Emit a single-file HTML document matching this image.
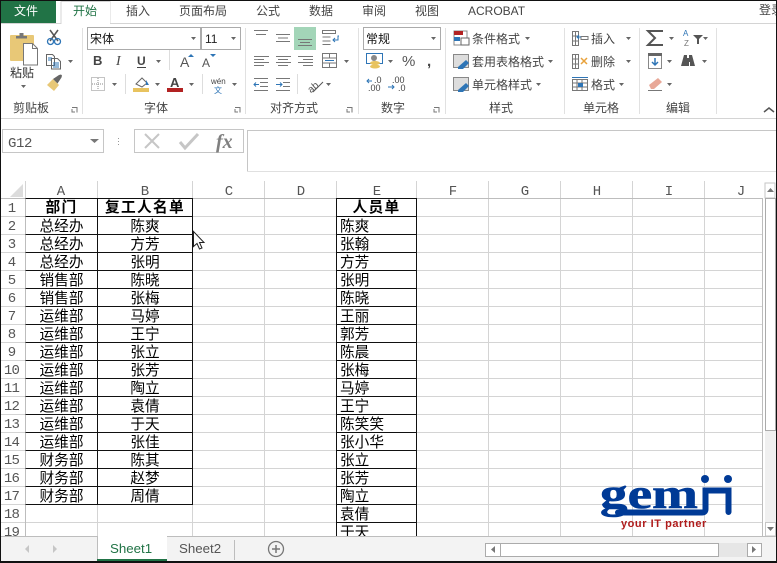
<!DOCTYPE html>
<html><head><meta charset="utf-8"><style>
html,body{margin:0;padding:0;background:#fff}
#p{position:relative;width:777px;height:563px;overflow:hidden;background:#fff;font-family:"Liberation Sans","Noto Sans CJK SC",sans-serif}
svg{position:absolute;left:0;top:0}
.c,.h,.r,.e{position:absolute;height:18px;line-height:18px;font-size:14.67px;color:#000;text-align:center;font-family:"Liberation Sans","Noto Sans CJK SC",sans-serif;white-space:nowrap;margin-top:1px}
.a{left:26px;width:71px}.b{left:98px;width:94px}.e{left:340px;width:76px;text-align:left}
.t{font-weight:bold;letter-spacing:1.33px;margin-top:0}
.r{left:1px;width:21px;font-family:"Liberation Mono",monospace;color:#555;font-size:14px;text-align:center;letter-spacing:-.8px}
.h{top:182px;font-family:"Liberation Mono",monospace;color:#555;font-size:14px;width:72px}
text{font-family:"Liberation Sans","Noto Sans CJK SC",sans-serif;font-size:12px;fill:#444}
</style></head><body><div id="p">
<svg width="777" height="563" viewBox="0 0 777 563">
<!-- frame -->
<rect x="0" y="1" width="56" height="23" fill="#217346"/>
<text x="14" y="15" fill="#fff" style="fill:#fff">文件</text>
<path d="M0 23.500H61V1.500H110V23.500H777" fill="none" stroke="#d4d4d4"/>
<rect x="62" y="2" width="48" height="22" fill="#fff"/>
<text x="73" y="15" style="fill:#217346">开始</text>
<text x="126" y="15">插入</text><text x="179" y="15">页面布局</text><text x="256" y="15">公式</text><text x="309" y="15">数据</text><text x="362" y="15">审阅</text><text x="415" y="15">视图</text><text x="468" y="15">ACROBAT</text><text x="759" y="14">登录</text>
<!-- ribbon lines -->
<path d="M82.500 28V114M245.500 28V114M358.500 28V114M445.500 28V114M564.500 28V114M639.500 28V114M716.500 28V114" stroke="#e1e1e1"/>
<path d="M0 118.500H777" stroke="#d4d4d4"/>
<!-- group labels -->
<g text-anchor="middle"><text x="31" y="112">剪贴板</text><text x="156" y="112">字体</text><text x="294" y="112">对齐方式</text><text x="393" y="112">数字</text><text x="501" y="112">样式</text><text x="601" y="112">单元格</text><text x="678" y="112">编辑</text></g>
<g fill="none" stroke="#777"><path d="M72 107.500h5v5M75 112h-3v-3M235 107.500h5v5M238 112h-3v-3M347 107.500h5v5M350 112h-3v-3M434 107.500h5v5M437 112h-3v-3"/></g>
<path d="M764 112l5-4 5 4" fill="none" stroke="#555" stroke-width="1.500"/>
<!-- clipboard -->
<rect x="10" y="35" width="24" height="26" rx="1" fill="#e8c877"/>
<path d="M16 38v-2h3.500v-3h4v3H27v2.500H16z" fill="#777"/>
<path d="M23.500 43.500h9l5 5v16.500h-14z" fill="#fff" stroke="#777"/><path d="M32.500 43.500v5h5" fill="none" stroke="#777"/>
<text x="10" y="77" style="fill:#333">粘贴</text>
<!-- scissors -->
<path d="M50 30l8 11M58 30l-8 11" stroke="#555" stroke-width="1.500" fill="none"/>
<circle cx="50.500" cy="41.500" r="3" fill="none" stroke="#2e75b6" stroke-width="1.300"/><circle cx="57.500" cy="41.500" r="3" fill="none" stroke="#2e75b6" stroke-width="1.300"/>
<!-- copy -->
<path d="M46.500 54.500h6l2 2v9h-8zM51.500 58.500h6l3 3v7.500h-9z" fill="#fff" stroke="#666"/><path d="M48 58h4M48 60h3M53 63h6M53 65h6M53 67h6" stroke="#2e75b6" fill="none"/>
<!-- brush -->
<path d="M47 85l6-6 6 6-5 6z" fill="#e8c877"/><path d="M53 79l3-2 3-2 2-.500 1 1-.500 2-2 3-2 3z" fill="#666"/>
<!-- font combos -->
<rect x="87.500" y="27.500" width="113" height="22" fill="#fff" stroke="#ababab"/><rect x="201.500" y="27.500" width="39" height="22" fill="#fff" stroke="#ababab"/>
<text x="90" y="43" style="fill:#111">宋体</text><text x="205" y="43" style="fill:#222">11</text>
<text x="366" y="43" style="fill:#111">常规</text>
<rect x="363.500" y="27.500" width="77" height="22" fill="none" stroke="#ababab"/>
<!-- dropdown arrows -->
<g fill="#666"><path d="M191 37h5l-2.500 3zM231 37h5l-2.500 3zM431 37h5l-2.500 3zM21 85h5l-2.500 3zM68 60h5l-2.500 3zM156 60h5l-2.500 3zM112 83h5l-2.500 3zM155 83h5l-2.500 3zM189 83h5l-2.500 3zM232 83h5l-2.500 3zM344 60h5l-2.500 3zM326 83h5l-2.500 3zM388 60h5l-2.500 3zM525 37h5l-2.500 3zM548 60h5l-2.500 3zM536 83h5l-2.500 3zM626 37h5l-2.500 3zM626 60h5l-2.500 3zM619 83h5l-2.500 3zM669 37h5l-2.500 3zM703 37h5l-2.500 3zM667 60h5l-2.500 3zM702 60h5l-2.500 3zM667 83h5l-2.500 3z"/></g>
<!-- BIU -->
<text x="93" y="65" style="font-weight:bold;font-size:13px;fill:#444">B</text>
<text x="116" y="65" style="font-style:italic;font-family:'Liberation Serif',serif;font-size:14px;fill:#444">I</text>
<text x="137" y="65" style="font-size:12px;font-weight:bold;fill:#444">U</text><path d="M137 67.500h9" stroke="#444"/>
<path d="M169.500 50V70M125.500 74V94M202.500 74V94M297.500 74V94" stroke="#ddd"/>
<text x="180" y="67" style="font-size:14px;fill:#555">A</text><path d="M188 57h6l-3-3z" fill="#2e75b6"/>
<text x="202" y="67" style="font-size:12px;fill:#555">A</text><path d="M210 54h6l-3 3z" fill="#2e75b6"/>
<!-- borders -->
<path d="M91.500 77.500h13v13h-13zM98 78v12M92 84h12" fill="none" stroke="#888" stroke-dasharray="1 1"/>
<!-- fill colour -->
<path d="M136 84l6-6 5 5-5 4z" fill="#fff" stroke="#666"/><path d="M146 80l3 5h-3z" fill="#2e75b6"/><rect x="133" y="88" width="16" height="4" fill="#e8c35f"/>
<!-- font colour -->
<text x="170" y="87" style="font-size:13px;font-weight:bold;fill:#444">A</text><rect x="167" y="88" width="16" height="4" fill="#b22222"/>
<!-- wen -->
<text x="211" y="84" style="font-size:8px;fill:#444">wén</text><text x="214" y="93" style="font-size:8px;fill:#2e75b6">文</text>
<!-- align -->
<rect x="294" y="27" width="22" height="23" fill="#a3d5b8"/>
<g stroke="#777" fill="none"><path d="M254 30.500h14M256 34.500h10M276 34.500h14M278 38h10M276 41.500h14M298 39.500h14M300 42.500h10M298 45.500h14"/>
<path d="M254 56.500h15M254 59.500h10M254 62.500h15M254 65.500h10M276 56.500h15M278 59.500h10M276 62.500h15M278 65.500h10M298 56.500h15M303 59.500h10M298 62.500h15M303 65.500h10"/>
<path d="M322.500 53.500h14v14h-14zM322.500 58h14M322.500 63h14M329.500 54v4M329.500 63v4"/>
<path d="M322.500 30.500h13v3h-13zM322.500 37h8M322.500 41h8M322.500 44.500h8"/>
<path d="M254 78.500h14M260 82.500h8M260 86.500h8M254 90.500h14M276 78.500h14M283 82.500h7M283 86.500h7M276 90.500h14"/></g>
<path d="M325 60.500h9" stroke="#2e75b6" fill="none"/><path d="M339 36h-1v4h-5m2-2l-2 2 2 2" stroke="#2e75b6" fill="none"/>
<path d="M259 84.500h-5m2-2l-2 2 2 2M276 84.500h6m-2-2l2 2-2 2" stroke="#2e75b6" fill="none"/>
<text x="306" y="90" transform="rotate(-40 313 85)" style="font-size:10px;fill:#555">ab</text><path d="M313 92l10-10" stroke="#555"/>
<!-- number -->
<rect x="366.500" y="53.500" width="16" height="10" fill="#fff" stroke="#2e75b6"/><circle cx="374" cy="58" r="3" fill="#888"/><ellipse cx="375" cy="63" rx="5" ry="2" fill="#e8c35f"/><ellipse cx="375" cy="66.500" rx="5" ry="2" fill="#e8c35f"/>
<text x="402" y="66" style="font-size:15px;fill:#555">%</text><text x="427" y="66" style="font-size:15px;font-weight:bold;fill:#444">,</text>
<text x="374" y="83" style="font-size:9px;fill:#444">.0</text><text x="368" y="91" style="font-size:9px;fill:#444">.00</text><text x="392" y="83" style="font-size:9px;fill:#444">.00</text><text x="398" y="91" style="font-size:9px;fill:#444">.0</text>
<path d="M372 81h-5m2-2l-2 2 2 2M388 87h6m-2-2l2 2-2 2" stroke="#2e75b6" fill="none"/>
<!-- styles -->
<path d="M454 31h13v14h-13z" fill="#fff" stroke="#888"/><rect x="454" y="31" width="9" height="4" fill="#b22222"/><rect x="454" y="37" width="6" height="4" fill="#2e75b6"/><rect x="461" y="38" width="8" height="7" fill="#fff" stroke="#666"/>
<path d="M453.500 54.500h15v13h-15z" fill="#ddd" stroke="#888"/><path d="M458 67l8-7 3 3-6 6h-5z" fill="#2e75b6"/>
<path d="M453.500 77.500h15v13h-15z" fill="#ddd" stroke="#888"/><path d="M458 90l8-7 3 3-6 6h-5z" fill="#2e75b6"/>
<text x="472" y="43">条件格式</text><text x="472" y="66">套用表格格式</text><text x="472" y="89">单元格样式</text>
<!-- cells -->
<g fill="none" stroke="#777"><path d="M572.500 31.500h6v14h-6zM572.500 36h6M572.500 41h6M575.500 31v14M581 36.500h7v3h-7z"/><path d="M572.500 54.500h6v14h-6zM572.500 59h6M572.500 64h6M575.500 54v14"/><path d="M572.500 79.500h15v11h-15zM577 80v11M582 80v11M573 83h14M573 87h14"/></g>
<path d="M577 37h4m-2-2l-2 2 2 2" stroke="#2e75b6" fill="none"/><path d="M581 58l6 6m0-6l-6 6" stroke="#e8a23c" stroke-width="1.500"/><rect x="578" y="83" width="5" height="4" fill="#2e75b6"/><path d="M572 77.500h16" stroke="#2e75b6"/>
<text x="591" y="43">插入</text><text x="591" y="66">删除</text><text x="591" y="89">格式</text>
<!-- edit -->
<path d="M663 31h-15l7 7-7 7h15" fill="none" stroke="#555" stroke-width="2"/>
<text x="683" y="36" style="font-size:8px;fill:#2e75b6">A</text><text x="684" y="46" style="font-size:8px;fill:#777">Z</text><path d="M693 35h10l-4 4v5h-2v-5z" fill="#555"/>
<rect x="648.500" y="53.500" width="13" height="15" fill="#fff" stroke="#888"/><rect x="648" y="53" width="14" height="3" fill="#666"/><path d="M655 58v7m-3-3l3 3 3-3" stroke="#2e75b6" stroke-width="1.500" fill="none"/>
<path d="M684 55h3v3h2v-3h3l3 11h-5v-4h-1v4h-8z" fill="#555"/>
<path d="M649 85l9-7 4 4-8 7h-3z" fill="#e8a898"/><path d="M648 90.500h14" stroke="#777"/>
<!-- formula bar -->
<rect x="2.500" y="129.500" width="101" height="23" fill="#fff" stroke="#c6c6c6"/>
<text x="8" y="147" style="font-family:'Liberation Mono',monospace;font-size:14px;fill:#555;letter-spacing:-.4px">G12</text>
<path d="M90 139h9l-4.500 4z" fill="#777"/>
<path d="M118.500 138v1M118.500 141v1M118.500 144v1" stroke="#999"/>
<rect x="134.500" y="129.500" width="109" height="23" fill="#fff" stroke="#c6c6c6"/>
<path d="M145 134l14 14M159 134l-14 14" stroke="#c6c6c6" stroke-width="2"/>
<path d="M180 142l5 6 13-14" stroke="#c6c6c6" stroke-width="3" fill="none"/>
<text x="216" y="148" style="font-family:'Liberation Serif',serif;font-style:italic;font-weight:bold;font-size:20px;fill:#808080">fx</text>
<path d="M247.500 172V130.500H777" fill="none" stroke="#c6c6c6"/><path d="M247 171.500H777" stroke="#e0e0e0"/>
<!-- grid -->
<rect x="0" y="181" width="763" height="17" fill="#fff"/>
<path d="M10 197h13v-13z" fill="#dcdcdc"/>
<g stroke="#d4d4d4" fill="none">
<path d="M25.500 181V536M97.500 181V536M192.500 181V536M264.500 181V536M336.500 181V536M416.500 181V536M488.500 181V536M560.500 181V536M632.500 181V536M704.500 181V536"/>
<path d="M0 216.500H762M0 234.500H762M0 252.500H762M0 270.500H762M0 288.500H762M0 306.500H762M0 324.500H762M0 342.500H762M0 360.500H762M0 378.500H762M0 396.500H762M0 414.500H762M0 432.500H762M0 450.500H762M0 468.500H762M0 486.500H762M0 504.500H762M0 522.500H762"/>
</g>
<path d="M0 198.500H762M762.500 198V536M25.500 198V536" stroke="#bdbdbd" fill="none"/>
<!-- black borders on table -->
<g stroke="#111" fill="none">
<path d="M25.500 198.500H192.500M25.500 216.500H192.500M25.500 234.500H192.500M25.500 252.500H192.500M25.500 270.500H192.500M25.500 288.500H192.500M25.500 306.500H192.500M25.500 324.500H192.500M25.500 342.500H192.500M25.500 360.500H192.500M25.500 378.500H192.500M25.500 396.500H192.500M25.500 414.500H192.500M25.500 432.500H192.500M25.500 450.500H192.500M25.500 468.500H192.500M25.500 486.500H192.500M25.500 504.500H192.500"/>
<path d="M97.500 198V505M192.500 198V505"/>
<path d="M336.500 198V536M416.500 198V536M336.500 198.500H416.500M336.500 216.500H416.500M336.500 234.500H416.500M336.500 252.500H416.500M336.500 270.500H416.500M336.500 288.500H416.500M336.500 306.500H416.500M336.500 324.500H416.500M336.500 342.500H416.500M336.500 360.500H416.500M336.500 378.500H416.500M336.500 396.500H416.500M336.500 414.500H416.500M336.500 432.500H416.500M336.500 450.500H416.500M336.500 468.500H416.500M336.500 486.500H416.500M336.500 504.500H416.500M336.500 522.500H416.500"/>
</g>
<!-- logo -->
<text x="600" y="508" textLength="98" lengthAdjust="spacingAndGlyphs" style="font-family:'Liberation Serif',serif;font-weight:bold;font-size:42px;fill:#003a96;stroke:#003a96;stroke-width:.6">gem</text>
<path d="M618 512.500H702q3.500 0 3.500-3.500V490.500H728.500V512" fill="none" stroke="#003a96" stroke-width="6" stroke-linecap="round"/>
<circle cx="705" cy="479" r="4" fill="#003a96"/><circle cx="728" cy="479" r="4" fill="#003a96"/>
<text x="621" y="527" style="font-size:11px;font-weight:bold;fill:#b01c1c;letter-spacing:.55px">your IT partner</text>
<!-- vertical scrollbar -->
<rect x="763" y="172" width="14" height="364" fill="#fff"/>
<rect x="765" y="183" width="10" height="15" fill="#fff" stroke="#c6c6c6"/><path d="M767 192h7l-3.500-4z" fill="#777"/>
<rect x="765.500" y="198.500" width="10" height="232" fill="#fff" stroke="#ababab"/>
<rect x="765" y="431" width="11" height="91" fill="#f0f0f0"/>
<rect x="765.500" y="522.500" width="10" height="13.500" fill="#fff" stroke="#c6c6c6"/><path d="M767 527h7l-3.500 4z" fill="#777"/>
<!-- bottom bar -->
<rect x="0" y="536" width="777" height="26" fill="#f3f3f3"/>
<path d="M0 536.500H777" stroke="#bdbdbd"/>
<path d="M97.500 561V536.500M166.500 536.500V561" stroke="#bdbdbd"/><rect x="98" y="536" width="69" height="25" fill="#fff"/>
<rect x="97" y="559" width="70" height="2" fill="#217346"/>
<text x="110" y="553" style="font-size:13.300px;fill:#217346">Sheet1</text>
<text x="179" y="553" style="font-size:13.300px;fill:#555">Sheet2</text>
<path d="M234.500 540V560" stroke="#bdbdbd"/>
<circle cx="276" cy="549" r="7.500" fill="none" stroke="#777" stroke-width="1.300"/><path d="M272 549h8M276 545v8" stroke="#777" stroke-width="1.500"/>
<path d="M29 545v8l-4-4zM53 545v8l4-4z" fill="#c6c6c6"/>
<rect x="486" y="543" width="276" height="14" fill="#e6e6e6"/>
<rect x="485.500" y="543.500" width="15" height="13" fill="#fff" stroke="#ababab"/><path d="M495 546v7l-4-3.500z" fill="#777"/>
<rect x="500.500" y="543.500" width="218" height="13" fill="#fff" stroke="#ababab"/>
<rect x="747.500" y="543.500" width="14" height="13" fill="#fff" stroke="#ababab"/><path d="M752 546v7l4-3.500z" fill="#777"/>
<!-- cursor -->
<path d="M193.500 231.500v15l3.500-3 2.500 5.500 2.500-1-2.500-5.500h4.500z" fill="#fff" stroke="#222"/>
<!-- window frame -->
<path d="M0 0H777V1H0zM0 0H1V563H0zM776 0H777V563H776zM0 561H777V563H0z" fill="#111"/>
</svg>
<div class="h" style="left:25px">A</div><div class="h" style="left:97px;width:96px">B</div><div class="h" style="left:193px">C</div><div class="h" style="left:265px">D</div><div class="h" style="left:337px;width:80px">E</div><div class="h" style="left:417px">F</div><div class="h" style="left:489px">G</div><div class="h" style="left:561px">H</div><div class="h" style="left:633px">I</div><div class="h" style="left:705px">J</div>
<div class="r" style="top:199px">1</div><div class="r" style="top:217px">2</div><div class="r" style="top:235px">3</div><div class="r" style="top:253px">4</div><div class="r" style="top:271px">5</div><div class="r" style="top:289px">6</div><div class="r" style="top:307px">7</div><div class="r" style="top:325px">8</div><div class="r" style="top:343px">9</div><div class="r" style="top:361px">10</div><div class="r" style="top:379px">11</div><div class="r" style="top:397px">12</div><div class="r" style="top:415px">13</div><div class="r" style="top:433px">14</div><div class="r" style="top:451px">15</div><div class="r" style="top:469px">16</div><div class="r" style="top:487px">17</div><div class="r" style="top:505px">18</div><div class="r" style="top:523px;height:13px;overflow:hidden">19</div>
<div class="c a t" style="top:199px">部门</div><div class="c b t" style="top:199px">复工人名单</div>
<div class="c a" style="top:217px">总经办</div><div class="c b" style="top:217px">陈爽</div>
<div class="c a" style="top:235px">总经办</div><div class="c b" style="top:235px">方芳</div>
<div class="c a" style="top:253px">总经办</div><div class="c b" style="top:253px">张明</div>
<div class="c a" style="top:271px">销售部</div><div class="c b" style="top:271px">陈晓</div>
<div class="c a" style="top:289px">销售部</div><div class="c b" style="top:289px">张梅</div>
<div class="c a" style="top:307px">运维部</div><div class="c b" style="top:307px">马婷</div>
<div class="c a" style="top:325px">运维部</div><div class="c b" style="top:325px">王宁</div>
<div class="c a" style="top:343px">运维部</div><div class="c b" style="top:343px">张立</div>
<div class="c a" style="top:361px">运维部</div><div class="c b" style="top:361px">张芳</div>
<div class="c a" style="top:379px">运维部</div><div class="c b" style="top:379px">陶立</div>
<div class="c a" style="top:397px">运维部</div><div class="c b" style="top:397px">袁倩</div>
<div class="c a" style="top:415px">运维部</div><div class="c b" style="top:415px">于天</div>
<div class="c a" style="top:433px">运维部</div><div class="c b" style="top:433px">张佳</div>
<div class="c a" style="top:451px">财务部</div><div class="c b" style="top:451px">陈其</div>
<div class="c a" style="top:469px">财务部</div><div class="c b" style="top:469px">赵梦</div>
<div class="c a" style="top:487px">财务部</div><div class="c b" style="top:487px">周倩</div>
<div class="e t" style="top:199px;text-align:center;left:337px;width:79px">人员单</div>
<div class="e" style="top:217px">陈爽</div><div class="e" style="top:235px">张翰</div><div class="e" style="top:253px">方芳</div><div class="e" style="top:271px">张明</div><div class="e" style="top:289px">陈晓</div><div class="e" style="top:307px">王丽</div><div class="e" style="top:325px">郭芳</div><div class="e" style="top:343px">陈晨</div><div class="e" style="top:361px">张梅</div><div class="e" style="top:379px">马婷</div><div class="e" style="top:397px">王宁</div><div class="e" style="top:415px">陈笑笑</div><div class="e" style="top:433px">张小华</div><div class="e" style="top:451px">张立</div><div class="e" style="top:469px">张芳</div><div class="e" style="top:487px">陶立</div><div class="e" style="top:505px">袁倩</div><div class="e" style="top:523px;height:12px;overflow:hidden">于天</div>
</div></body></html>
